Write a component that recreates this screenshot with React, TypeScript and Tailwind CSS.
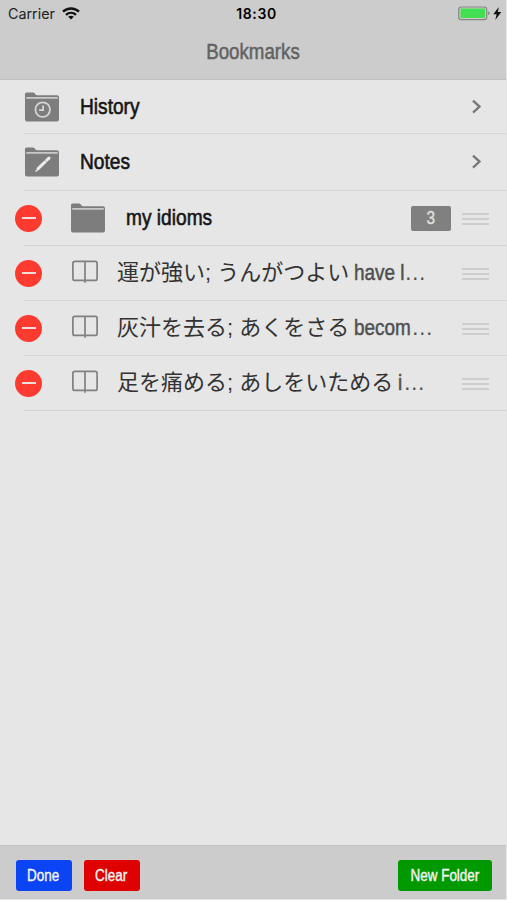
import type { ReactNode } from "react";

const sans = "font-['Liberation_Sans','Noto_Sans_CJK_JP',sans-serif]";

type FolderGlyph = "clock" | "pencil";

const shortcuts: { label: string; glyph: FolderGlyph; height: string }[] = [
  { label: "History", glyph: "clock", height: "h-[54px]" },
  { label: "Notes", glyph: "pencil", height: "h-[57px]" },
];

const idioms = [
  { japanese: "運が強い; うんがつよい", english: "have l", width: "w-[50px]" },
  { japanese: "灰汁を去る; あくをさる", english: "becom", width: "w-[57px]" },
  { japanese: "足を痛める; あしをいためる", english: "i", width: "w-[5px]" },
];

function StatusBar() {
  return (
    <div className="relative flex h-[27px] items-center justify-between pr-[4px] pl-2 font-['Inter',sans-serif] text-black">
      <div className="flex items-center gap-[7px]">
        <span className="text-[14.3px] text-[#222]">Carrier</span>
        <svg width="18" height="13" viewBox="0 0 18 13" fill="none" stroke="#111" strokeWidth="2.4">
          <path d="M1 4.7C5.5.4 12.5.4 17 4.7" />
          <path d="M4 7.9c2.9-2.7 7.1-2.7 10 0" />
          <path d="M6.2 9.8c1.6-1.5 4-1.5 5.6 0L9 12.6z" fill="#111" stroke="none" />
        </svg>
      </div>
      <span className="absolute inset-x-0 pl-[7px] text-center text-[14px] font-semibold tracking-[0.6px]">18:30</span>
      <svg width="44" height="16" viewBox="0 0 44 16">
        <rect x=".7" y="1" width="28" height="12.6" rx="2.7" fill="none" stroke="#858585" strokeWidth="1.2" />
        <rect x="2.4" y="2.6" width="24.6" height="9.4" rx="1" fill="#43df53" />
        <path d="M30.2 5.3c2 .7 2 3.3 0 4z" fill="#858585" />
        <path d="M40.8 1.1 35.3 8.3h3.3L37.3 13.9l6-7.8h-3.4z" fill="#111" />
      </svg>
    </div>
  );
}

function FolderIcon({ glyph }: { glyph?: FolderGlyph }) {
  return (
    <svg className="shrink-0" width="34" height="30" viewBox="0 0 34 30">
      <path
        d="M0 27.5V2Q0 .5 1.5.5H8q1 0 1.7.8l.8 1.1q.6.8 1.7.8H32q2 0 2 2v22.3q0 2-2 2H2q-2 0-2-2z"
        fill="#7d7d7d"
      />
      <path d="M1.2 5.9h31.6" stroke="#d6d6d6" strokeWidth="1.5" />
      {glyph === "clock" && (
        <g fill="none" stroke="#d5d5d5" strokeWidth="1.8">
          <circle cx="17.7" cy="17.6" r="7.3" />
          <path d="M18.1 13.4v4.8h-4" />
        </g>
      )}
      {glyph === "pencil" && (
        <g stroke="#ececec" strokeWidth="3">
          <path d="m12.4 22.4 8.3-8.1" />
          <path d="m21.8 13.2 2.2-2.1" strokeLinecap="round" />
          <path d="m11 24 1.6-1.4" strokeWidth="1.5" strokeLinecap="round" />
        </g>
      )}
    </svg>
  );
}

function BookIcon() {
  return (
    <svg className="mb-[2px] ml-px shrink-0" width="26" height="24" viewBox="0 0 26 24" fill="none" stroke="#808080" strokeWidth="1.7">
      <rect x=".9" y="1.4" width="24.2" height="19" rx="2" />
      <path d="M13 1.4v21.4" />
    </svg>
  );
}

function RemoveButton() {
  return (
    <button type="button" aria-label="Remove" className="flex size-[27px] shrink-0 items-center justify-center rounded-full bg-[#ff3b30]">
      <span className="h-[2px] w-[14px] bg-[#f4dedc]" />
    </button>
  );
}

function DragHandle() {
  return (
    <div className="flex w-[27px] shrink-0 flex-col gap-[3px] pt-px">
      <span className="h-[2px] bg-[#cdcdcd]" />
      <span className="h-[2px] bg-[#cdcdcd]" />
      <span className="h-[2px] bg-[#cdcdcd]" />
    </div>
  );
}

function RowTitle({ children }: { children: ReactNode }) {
  return (
    <span className="ml-[21px] flex-1 text-[22px] leading-[30px] whitespace-nowrap text-[#161616] [-webkit-text-stroke:0.6px_#161616]">
      <span className="inline-block origin-left scale-x-[0.87]">{children}</span>
    </span>
  );
}

// Editable rows start their separator below the middle of the remove button.
function EditRow({ children }: { children: ReactNode }) {
  return (
    <li>
      <div className="flex h-[54px] items-center pr-[18px] pl-[15px]">
        <RemoveButton />
        {children}
        <DragHandle />
      </div>
      <div className="ml-6 h-px bg-[#d4d4d4]" />
    </li>
  );
}

export default function App() {
  return (
    <div className={`${sans} flex h-[900px] w-[507px] flex-col overflow-hidden bg-[#e6e6e6]`}>
      <header className="mr-px h-20 border-b border-[#bfbfbf] bg-[#cccccc]">
        <StatusBar />
        <h1 className="mt-[10px] origin-center scale-x-[0.85] text-center text-[22px] leading-[30px] text-[#626262] [-webkit-text-stroke:0.5px_#626262]">
          Bookmarks
        </h1>
      </header>

      <ul className="flex-1">
        {shortcuts.map((item) => (
          <li key={item.label} className={`${item.height} flex flex-col`}>
            <div className="flex flex-1 items-center pr-[25px] pl-[25px]">
              <FolderIcon glyph={item.glyph} />
              <RowTitle>{item.label}</RowTitle>
              <svg width="11" height="16" viewBox="0 0 11 16" fill="none" stroke="#777" strokeWidth="2.3">
                <path d="m2 1.6 6.5 6L2 13.6" />
              </svg>
            </div>
            <div className="ml-6 h-px bg-[#d6d6d6]" />
          </li>
        ))}

        <EditRow>
          <div className="ml-[29px] flex">
            <FolderIcon />
          </div>
          <RowTitle>my idioms</RowTitle>
          <span className="mr-[11px] flex h-[25px] w-10 items-center justify-center rounded-[2px] bg-[#808080] text-[17.5px] text-[#e2e2e2] [-webkit-text-stroke:0.3px_#e2e2e2]">
            <span className="inline-block scale-x-[0.88]">3</span>
          </span>
        </EditRow>

        {idioms.map((idiom) => (
          <EditRow key={idiom.japanese}>
            <div className="ml-[29px] flex">
              <BookIcon />
            </div>
            <span className="ml-[19px] flex-1 text-[22px] leading-[30px] whitespace-nowrap text-[#333]">
              {idiom.japanese}
              <span className="ml-[5px] text-[#505050] [-webkit-text-stroke:0.5px_#505050]">
                <span className={`${idiom.width} inline-block origin-left scale-x-[0.86]`}>{idiom.english}</span>
              </span>
              <span className="text-[#505050]">…</span>
            </span>
          </EditRow>
        ))}
      </ul>

      <footer className="mr-px mb-px flex h-[54px] items-center gap-3 border-t border-[#c0c0c0] bg-[#cccccc] pt-[6px] pr-[14px] pl-[15.5px] text-[16px] whitespace-nowrap text-[#f5f5f5]">
        <button type="button" className="h-[31px] w-14 rounded-[3px] bg-[#0b44f5] [-webkit-text-stroke:0.4px_#f5f5f5]">
          <span className="inline-block scale-x-[0.84]">Done</span>
        </button>
        <button type="button" className="h-[31px] w-14 rounded-[3px] bg-[#df0000] [-webkit-text-stroke:0.4px_#f5f5f5]">
          <span className="inline-block scale-x-[0.84]">Clear</span>
        </button>
        <button type="button" className="ml-auto h-[31px] w-[94px] rounded-[3px] bg-[#009900] [-webkit-text-stroke:0.4px_#f5f5f5]">
          <span className="inline-block scale-x-[0.84]">New Folder</span>
        </button>
      </footer>
    </div>
  );
}
